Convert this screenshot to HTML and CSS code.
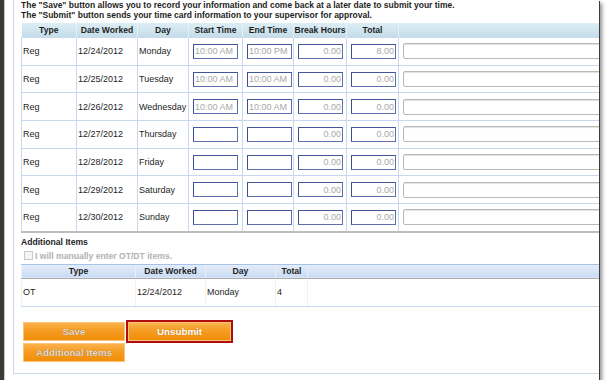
FILE: index.html
```html
<!DOCTYPE html>
<html lang="en">
<head>
    <meta charset="UTF-8">
    <title>Time Card</title>
    <link rel="stylesheet" href="styles.css">
</head>
<body>
    <div class="shot">
        <div class="frame-edge"></div>
        <div class="panel">
            <p class="intro">The "Save" button allows you to record your information and come back at a later date to submit your time.<br>The "Submit" button sends your time card information to your supervisor for approval.</p>

            <table class="timecard">
                <colgroup>
                    <col style="width: 55px">
                    <col style="width: 61px">
                    <col style="width: 51px">
                    <col style="width: 54px">
                    <col style="width: 51px">
                    <col style="width: 53px">
                    <col style="width: 52px">
                    <col style="width: 222px">
                </colgroup>
                <thead>
                    <tr>
                        <th>Type</th>
                        <th>Date Worked</th>
                        <th>Day</th>
                        <th>Start Time</th>
                        <th>End Time</th>
                        <th>Break Hours</th>
                        <th>Total</th>
                        <th></th>
                    </tr>
                </thead>
                <tbody>
                    <tr>
                        <td>Reg</td><td>12/24/2012</td><td>Monday</td>
                        <td class="in"><input class="field" value="10:00 AM"></td>
                        <td class="in"><input class="field" value="10:00 PM"></td>
                        <td class="in"><input class="field num" value="0.00"></td>
                        <td class="in"><input class="field num" value="8.00"></td>
                        <td class="in"><input class="note"></td>
                    </tr>
                    <tr>
                        <td>Reg</td><td>12/25/2012</td><td>Tuesday</td>
                        <td class="in"><input class="field" value="10:00 AM"></td>
                        <td class="in"><input class="field" value="10:00 AM"></td>
                        <td class="in"><input class="field num" value="0.00"></td>
                        <td class="in"><input class="field num" value="0.00"></td>
                        <td class="in"><input class="note"></td>
                    </tr>
                    <tr>
                        <td>Reg</td><td>12/26/2012</td><td>Wednesday</td>
                        <td class="in"><input class="field" value="10:00 AM"></td>
                        <td class="in"><input class="field" value="10:00 AM"></td>
                        <td class="in"><input class="field num" value="0.00"></td>
                        <td class="in"><input class="field num" value="0.00"></td>
                        <td class="in"><input class="note"></td>
                    </tr>
                    <tr>
                        <td>Reg</td><td>12/27/2012</td><td>Thursday</td>
                        <td class="in"><input class="field"></td>
                        <td class="in"><input class="field"></td>
                        <td class="in"><input class="field num" value="0.00"></td>
                        <td class="in"><input class="field num" value="0.00"></td>
                        <td class="in"><input class="note"></td>
                    </tr>
                    <tr>
                        <td>Reg</td><td>12/28/2012</td><td>Friday</td>
                        <td class="in"><input class="field"></td>
                        <td class="in"><input class="field"></td>
                        <td class="in"><input class="field num" value="0.00"></td>
                        <td class="in"><input class="field num" value="0.00"></td>
                        <td class="in"><input class="note"></td>
                    </tr>
                    <tr>
                        <td>Reg</td><td>12/29/2012</td><td>Saturday</td>
                        <td class="in"><input class="field"></td>
                        <td class="in"><input class="field"></td>
                        <td class="in"><input class="field num" value="0.00"></td>
                        <td class="in"><input class="field num" value="0.00"></td>
                        <td class="in"><input class="note"></td>
                    </tr>
                    <tr>
                        <td>Reg</td><td>12/30/2012</td><td>Sunday</td>
                        <td class="in"><input class="field"></td>
                        <td class="in"><input class="field"></td>
                        <td class="in"><input class="field num" value="0.00"></td>
                        <td class="in"><input class="field num" value="0.00"></td>
                        <td class="in"><input class="note"></td>
                    </tr>
                </tbody>
            </table>

            <div class="section-title">Additional Items</div>
            <label class="manual"><input type="checkbox" class="check" disabled>I will manually enter OT/DT items.</label>

            <table class="extra">
                <colgroup>
                    <col style="width: 114px">
                    <col style="width: 70px">
                    <col style="width: 70px">
                    <col style="width: 32px">
                    <col style="width: 312px">
                </colgroup>
                <thead>
                    <tr>
                        <th>Type</th>
                        <th>Date Worked</th>
                        <th>Day</th>
                        <th>Total</th>
                        <th></th>
                    </tr>
                </thead>
                <tbody>
                    <tr>
                        <td>OT</td><td>12/24/2012</td><td>Monday</td><td>4</td><td></td>
                    </tr>
                </tbody>
            </table>

            <div class="actions">
                <div class="action-row">
                    <button class="btn" disabled>Save</button>
                    <button class="btn btn-live">Unsubmit</button>
                </div>
                <button class="btn" disabled>Additional Items</button>
            </div>
        </div>
    </div>
</body>
</html>
```

FILE: styles.css
```css
/* General Styles */
body {
    margin: 0;
    background: #fff;
    font-family: "Liberation Sans", Arial, sans-serif;
    color: #1e1e1e;
}

/* Screenshot frame with drop shadow */
.shot {
    display: flex;
    width: 599px;
    height: 380px;
    overflow: hidden;
    background: #fff;
    box-shadow: 1px 1px 0 #3c3c3c, 3px 3px 4px rgba(0, 0, 0, 0.45);
}

.frame-edge {
    flex: 0 0 4px;
    background: #3a3a3a;
    border-right: 1px solid #c9c9c9;
}

.panel {
    flex: 0 0 auto;
    width: 640px;
    height: 374px;
    margin-left: 8px;
    padding-left: 7px;
    border: 1px solid #c9d9ee;
    border-top: none;
    box-sizing: border-box;
}

.intro {
    margin: 0;
    font-size: 8.5px;
    font-weight: bold;
    line-height: 10px;
    white-space: nowrap;
}

/* Time card table */
table {
    border-collapse: collapse;
    table-layout: fixed;
    font-size: 9px;
}

th {
    white-space: nowrap;
    overflow: hidden;
}

.timecard {
    width: 599px;
    margin-top: 3px;
    border-bottom: 2px solid #bdbdbd;
}

.timecard th {
    height: 14px;
    padding: 0;
    font-size: 8.6px;
    font-weight: bold;
    line-height: 14px;
    text-align: center;
    background: linear-gradient(#dcedf4, #c4dde9);
    border-left: 1px solid #e6f0f5;
}

.timecard th:first-child {
    border-left: none;
}

.timecard td {
    height: 26.7px;
    padding: 0 0 0 1px;
    border-top: 1px solid #c8d9ef;
    border-left: 1px solid #c8d9ef;
    white-space: nowrap;
}

.timecard td.in {
    padding-left: 4px;
}

.field {
    display: block;
    width: 45px;
    height: 15px;
    box-sizing: border-box;
    padding: 0 1px;
    font-family: inherit;
    font-size: 9px;
    color: #a9a9a9;
    background: #fff;
    border: 1px solid #5e6fae;
    border-top-color: #44569a;
    border-left-color: #3d4f94;
    border-radius: 0;
    outline: none;
}

.field.num {
    text-align: right;
}

.note {
    display: block;
    width: 230px;
    height: 16px;
    box-sizing: border-box;
    border: 1px solid #b9b9b9;
    border-radius: 2px;
    box-shadow: inset 0 1px 1px #e2e2e2;
    background: #fff;
    outline: none;
}

/* Additional items */
.section-title {
    margin-top: 4px;
    font-size: 8.6px;
    font-weight: bold;
    line-height: 10px;
}

.manual {
    display: flex;
    align-items: center;
    margin-top: 4px;
    padding-left: 3px;
    font-size: 8.6px;
    font-weight: bold;
    line-height: 10px;
    color: #b2b2b2;
}

.check {
    appearance: none;
    width: 9px;
    height: 9px;
    margin: 0 2px 0 0;
    border: 1px solid #c9c9c9;
    background: #f5f5f5;
}

.extra {
    width: 598px;
    margin-top: 3px;
    border-left: 1px solid #bcd1ee;
}

.extra th {
    height: 13px;
    padding: 0;
    font-size: 8.6px;
    font-weight: bold;
    line-height: 12px;
    text-align: center;
    background: linear-gradient(#e4eefa, #c9dbf3);
    border-top: 1px solid #a7c2e8;
    border-bottom: 1px solid #aaaaaa;
    border-left: 1px solid #e9eff8;
}

.extra td {
    height: 27px;
    padding: 0 0 0 1px;
    border-left: 1px solid #f0f0f0;
    border-bottom: 1px solid #c8d9ef;
}

/* Buttons */
.actions {
    display: flex;
    flex-direction: column;
    gap: 2px;
    margin-top: 15px;
    padding-left: 2px;
}

.action-row {
    display: flex;
    gap: 3px;
}

.btn {
    width: 102px;
    height: 19px;
    padding: 0;
    font-family: inherit;
    font-size: 9.8px;
    font-weight: bold;
    color: #dcdcdc;
    text-shadow: 0 0 1px #b06a10;
    background: linear-gradient(#fbb24c, #f59c22 45%, #f18e08);
    border: 1px solid #fbc67c;
}

.btn-live {
    width: 103px;
    color: #fff;
    outline: 2px solid #b00d0d;
    outline-offset: 0;
}
```
